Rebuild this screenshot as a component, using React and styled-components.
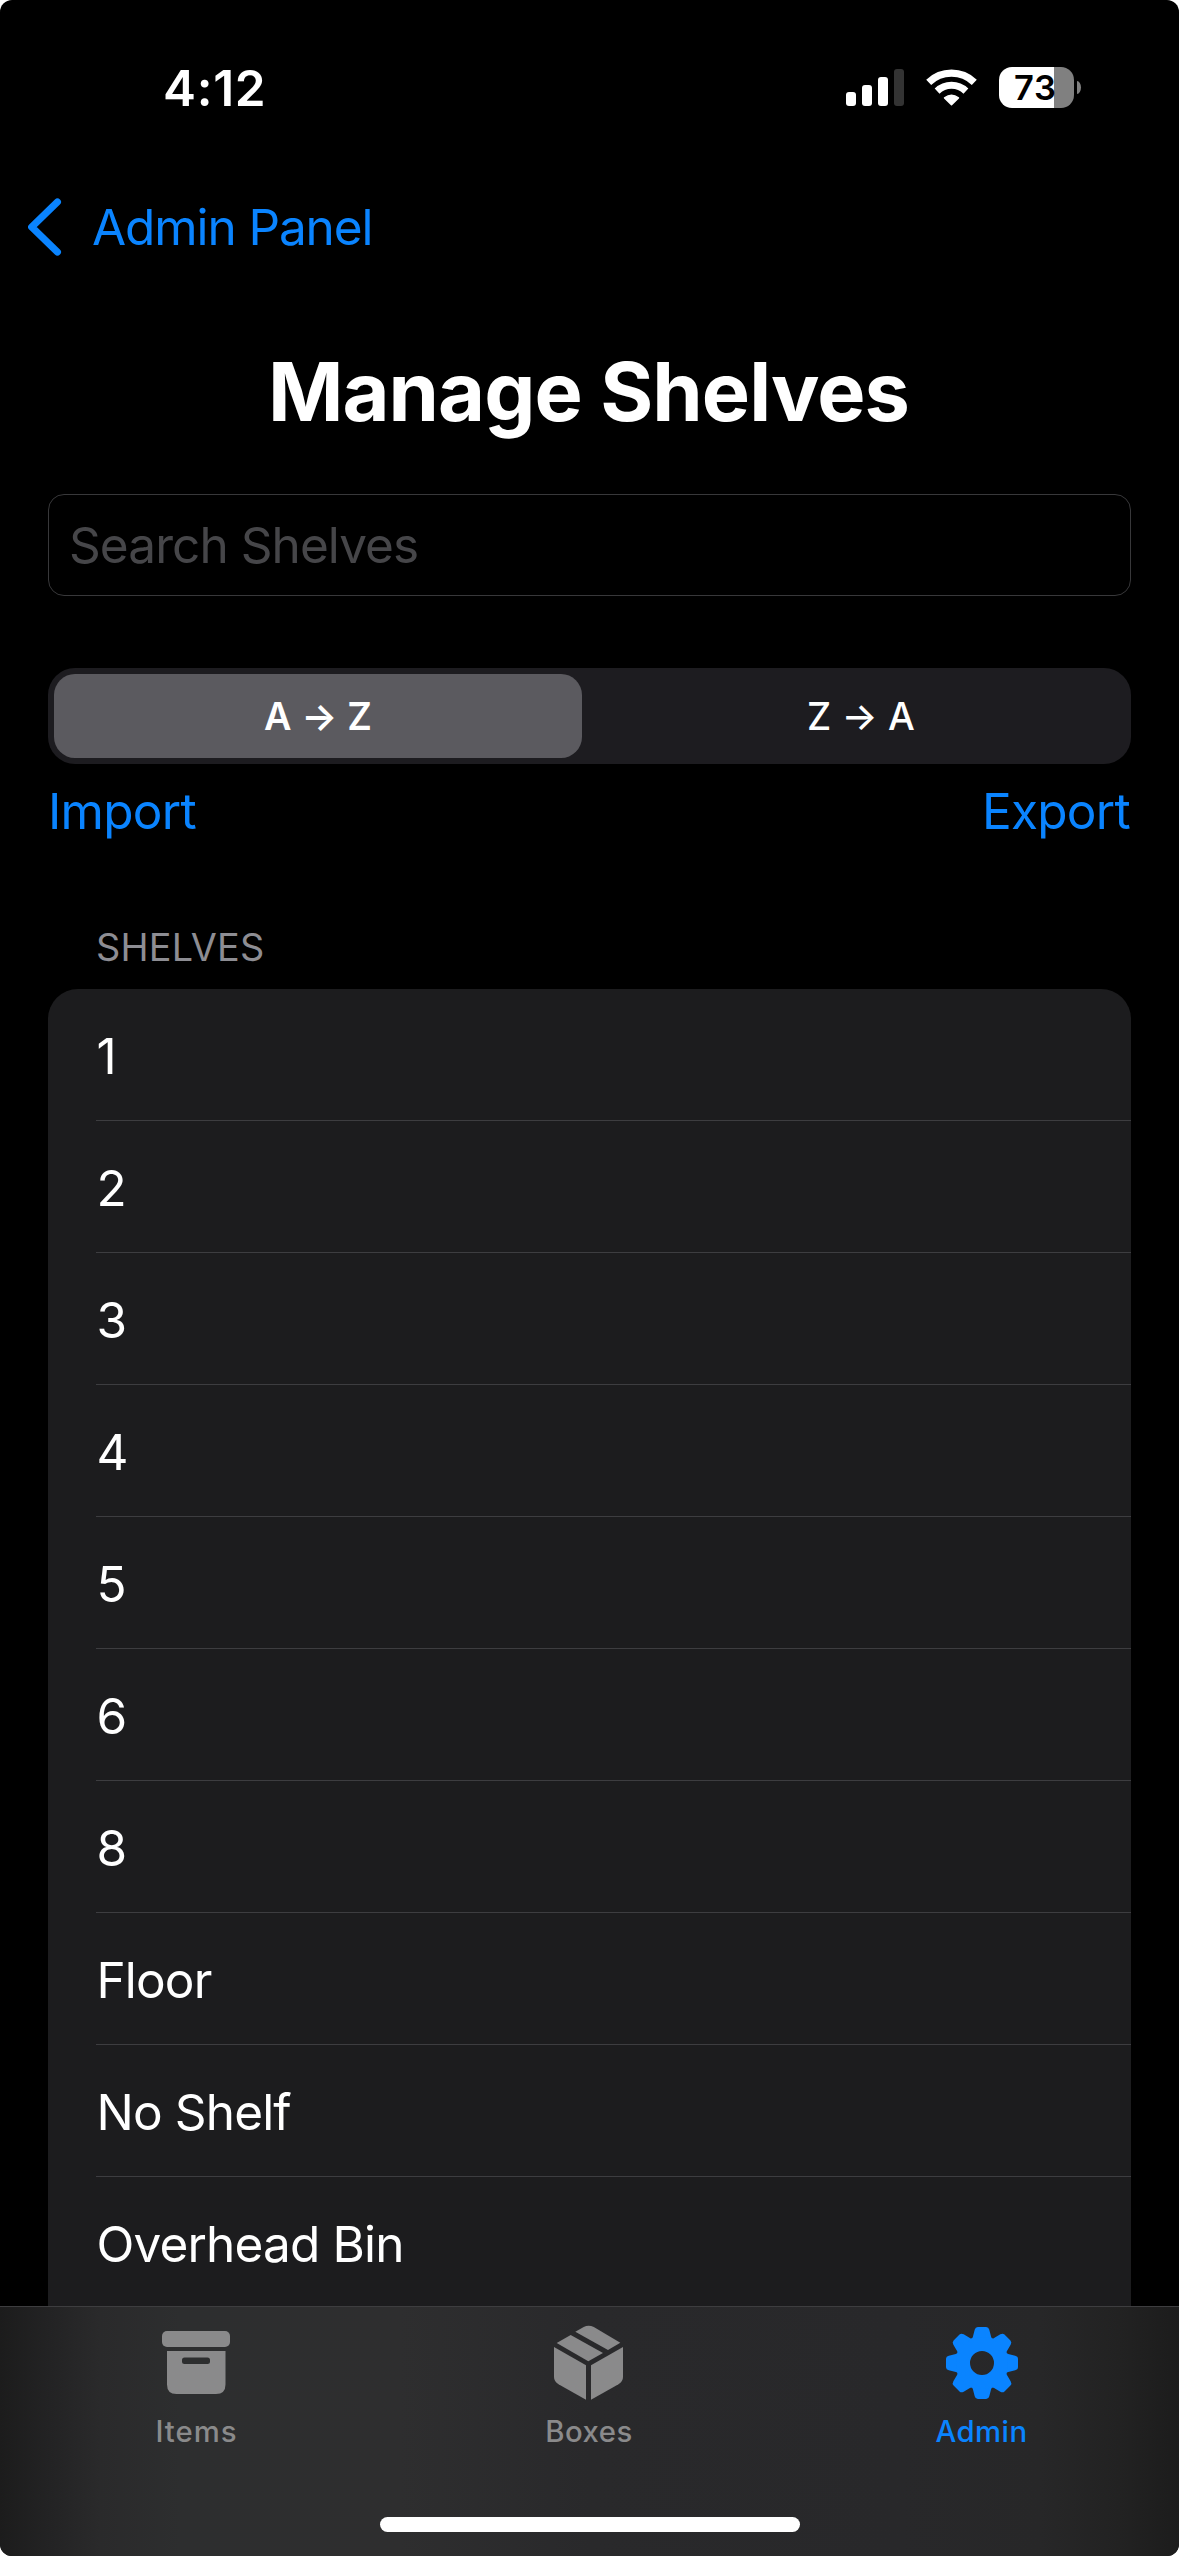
import React from 'react';
import styled, { createGlobalStyle } from 'styled-components';

const BLUE = '#0a84ff';
const GREY = '#8a8a8b';

const GlobalStyle = createGlobalStyle`
  * { box-sizing: border-box; }
  body {
    margin: 0;
    background: #fff;
    font-family: Inter, "Liberation Sans", sans-serif;
  }
  svg { display: block; }
`;

const Screen = styled.div`
  width: 1179px;
  height: 2556px;
  display: flex;
  flex-direction: column;
  overflow: hidden;
  border-radius: 12px;
  background: #000;
  color: #fff;
`;

const StatusBar = styled.header`
  flex: none;
  height: 175px;
  padding: 0 98px 0 163px;
  display: flex;
  align-items: center;
  justify-content: space-between;
`;

const Clock = styled.span`
  font-size: 49.5px;
  line-height: 60px;
  font-weight: 600;
  letter-spacing: 0.7px;
`;

const StatusIcons = styled.div`
  display: flex;
  align-items: center;
`;

const Signal = styled.svg`
  width: 58px;
  height: 37px;
  margin-right: 22px;
`;

const Wifi = styled.svg`
  width: 51px;
  height: 37px;
  margin-right: 22px;
`;

const Battery = styled.div`
  width: 75px;
  height: 41px;
  padding-left: 15px;
  border-radius: 13px;
  background: linear-gradient(to right, #fff 55px, #808080 55px);
  color: #000;
  font-size: 34.5px;
  line-height: 41px;
  font-weight: 600;
  letter-spacing: 0.6px;
`;

const BatteryTip = styled.div`
  width: 4px;
  height: 13px;
  margin-left: 3px;
  border-radius: 0 4px 4px 0 / 0 6.5px 6.5px 0;
  background: #808080;
`;

const NavBar = styled.nav`
  flex: none;
  height: 103px;
  padding-left: 27px;
  display: flex;
  align-items: center;
`;

const BackLink = styled.a`
  display: flex;
  align-items: center;
  gap: 30px;
  color: ${BLUE};
  font-size: 49.5px;
  line-height: 60px;
  letter-spacing: -1.1px;
`;

const Chevron = styled.svg`
  width: 35px;
  height: 58px;
`;

const Title = styled.h1`
  flex: none;
  margin: 63px 0 51px;
  padding-right: 2px;
  font-size: 81px;
  line-height: 102px;
  font-weight: 700;
  letter-spacing: -0.9px;
  text-align: center;
`;

const Content = styled.main`
  flex: 1;
  min-height: 0;
  padding: 0 48px;
  display: flex;
  flex-direction: column;
`;

const SearchField = styled.input`
  flex: none;
  width: 100%;
  height: 102px;
  margin: 0;
  padding: 0 20px;
  border: 1px solid #38383a;
  border-radius: 16px;
  background: transparent;
  outline: none;
  color: #fff;
  font-family: inherit;
  font-size: 49.5px;
  letter-spacing: -0.92px;
  &::placeholder { color: #464649; opacity: 1; }
`;

const Segmented = styled.div`
  flex: none;
  height: 96px;
  margin-top: 72px;
  padding: 6px 0 6px 6px;
  display: grid;
  grid-template-columns: 528px 1fr;
  border-radius: 27px;
  background: #1d1c20;
`;

const Segment = styled.button`
  border: 0;
  padding: 0 0 0 ${(p) => (p.$active ? 0 : 9)}px;
  border-radius: 21px;
  background: ${(p) => (p.$active ? '#5b5a5f' : 'transparent')};
  color: #fff;
  font-family: inherit;
  font-size: 37.8px;
  font-weight: ${(p) => (p.$active ? 600 : 500)};
  letter-spacing: 0.12px;
`;

const Actions = styled.div`
  flex: none;
  margin-top: 17px;
  padding-right: 1px;
  display: flex;
  justify-content: space-between;
`;

const Action = styled.a`
  color: ${BLUE};
  font-size: 49.5px;
  line-height: 60px;
  letter-spacing: -0.72px;
`;

const SectionLabel = styled.h2`
  flex: none;
  margin: 82px 0 18px;
  padding-left: 48px;
  color: #8d8d93;
  font-size: 37.8px;
  line-height: 48px;
  font-weight: 400;
  letter-spacing: 0.22px;
`;

const List = styled.ul`
  flex: 1;
  min-height: 0;
  margin: 0;
  padding: 0 0 0 48px;
  list-style: none;
  overflow: hidden;
  border-radius: 30px 30px 0 0;
  background: #1c1c1e;
`;

const Row = styled.li`
  height: 132px;
  padding: 2px 0 0 0.5px;
  display: flex;
  align-items: center;
  border-bottom: 1px solid #3d3d40;
  font-size: 49.5px;
  line-height: 60px;
  letter-spacing: -0.85px;
`;

const TabBar = styled.footer`
  flex: none;
  height: 250px;
  padding-bottom: 24px;
  display: flex;
  flex-direction: column;
  align-items: center;
  justify-content: space-between;
  border-top: 1px solid #3d3d3f;
  background: linear-gradient(
    to right,
    #1c1c1c 0,
    #232324 50px,
    #2a2a2b 100px,
    #2d2e2f 180px,
    #2e2e2f 400px,
    #29292b 590px,
    #28282a 900px,
    #272728 1040px,
    #222222 1120px,
    #1c1c1c 1179px
  );
`;

const Tabs = styled.div`
  width: 100%;
  padding-top: 16px;
  display: grid;
  grid-template-columns: repeat(3, 1fr);
`;

const Tab = styled.a`
  display: flex;
  flex-direction: column;
  align-items: center;
  gap: 10px;
  color: ${(p) => (p.$active ? BLUE : GREY)};
  font-size: 29.3px;
  line-height: 37px;
  font-weight: 500;
`;

const TabLabel = styled.span`
  padding-right: ${(p) => p.$nudge || 0}px;
  letter-spacing: ${(p) => p.$tracking}px;
`;

const TabIcon = styled.svg`
  width: 79px;
  height: 80px;
  fill: currentColor;
`;

const HomeIndicator = styled.div`
  width: 420px;
  height: 15px;
  border-radius: 8px;
  background: #fff;
`;

const shelves = ['1', '2', '3', '4', '5', '6', '8', 'Floor', 'No Shelf', 'Overhead Bin'];

const TOOTH = 'M-10.8-24.2Q-9.4-24.6-9.1-26.2L-7.3-33.2Q-6.6-36-4.2-36H4.2Q6.6-36 7.3-33.2L9.1-26.2Q9.4-24.6 10.8-24.2L8-18H-8Z';

const ArchiveIcon = () => (
  <TabIcon viewBox="0 0 79 80">
    <rect x="5" y="8" width="68" height="16" rx="5" />
    <path
      fillRule="evenodd"
      d="M10 28H68.5V61.5Q68.5 71 59 71H19.5Q10 71 10 61.5ZM27.500 34.500Q25 34.500 25 37V38.500Q25 41 27.500 41H50.500Q53 41 53 38.500V37Q53 34.500 50.500 34.500Z"
    />
  </TabIcon>
);

const BoxIcon = () => (
  <TabIcon viewBox="0 0 79 80">
    <path d="M25.300 8.700L33.700 4Q38.500 1.500 43.800 4L70.300 19.700L58 27Z" />
    <path d="M6.700 20L20.700 12L53 30L38.300 38.300Z" />
    <path d="M4 24L36 42.300V76.700L8.500 61.200Q4 58.500 4 54Z" />
    <path d="M73 24L41 42.300V76.700L68.500 61.200Q73 58.500 73 54Z" />
  </TabIcon>
);

const GearIcon = () => (
  <TabIcon viewBox="0 0 79 80">
    <g transform="translate(39 40)">
      {[0, 45, 90, 135, 180, 225, 270, 315].map((a) => (
        <path key={a} d={TOOTH} transform={`rotate(${a})`} />
      ))}
      <circle r="19" fill="none" stroke="currentColor" strokeWidth="14" />
    </g>
  </TabIcon>
);

export default function App() {
  return (
    <>
      <GlobalStyle />
      <Screen>
        <StatusBar>
          <Clock>4:12</Clock>
          <StatusIcons>
            <Signal viewBox="0 0 58 37" fill="#fff">
              <rect x="0" y="23" width="10" height="14" rx="3" />
              <rect x="16" y="16" width="10" height="21" rx="3" />
              <rect x="32" y="8" width="10" height="29" rx="3" />
              <rect x="48" y="0" width="10" height="37" rx="3" fill="#333" />
            </Signal>
            <Wifi viewBox="0 0 51 37" fill="none" stroke="#fff">
              <path d="M2.700 13.300A32.900 32.900 0 0 1 48.300 13.300" strokeWidth="7.2" />
              <path d="M11.100 22.100A20.800 20.800 0 0 1 39.900 22.100" strokeWidth="7" />
              <path d="M25.500 35.700L18.600 28.900Q25.500 23.700 32.400 28.900Z" fill="#fff" strokeWidth="1.600" strokeLinejoin="round" />
            </Wifi>
            <Battery>73</Battery>
            <BatteryTip />
          </StatusIcons>
        </StatusBar>

        <NavBar>
          <BackLink>
            <Chevron viewBox="0 0 35 58" fill="none" stroke={BLUE} strokeWidth="7.2" strokeLinecap="round" strokeLinejoin="round">
              <path d="M30.400 4L4.700 29L30.400 54" />
            </Chevron>
            Admin Panel
          </BackLink>
        </NavBar>

        <Title>Manage Shelves</Title>

        <Content>
          <SearchField placeholder="Search Shelves" />
          <Segmented>
            <Segment $active>A → Z</Segment>
            <Segment>Z → A</Segment>
          </Segmented>
          <Actions>
            <Action>Import</Action>
            <Action>Export</Action>
          </Actions>
          <SectionLabel>SHELVES</SectionLabel>
          <List>
            {shelves.map((name) => (
              <Row key={name}>{name}</Row>
            ))}
          </List>
        </Content>

        <TabBar>
          <Tabs>
            <Tab>
              <ArchiveIcon />
              <TabLabel $tracking={1}>Items</TabLabel>
            </Tab>
            <Tab>
              <BoxIcon />
              <TabLabel $tracking={0.55} $nudge={1}>Boxes</TabLabel>
            </Tab>
            <Tab $active>
              <GearIcon />
              <TabLabel $tracking={0.5} $nudge={2}>Admin</TabLabel>
            </Tab>
          </Tabs>
          <HomeIndicator />
        </TabBar>
      </Screen>
    </>
  );
}
